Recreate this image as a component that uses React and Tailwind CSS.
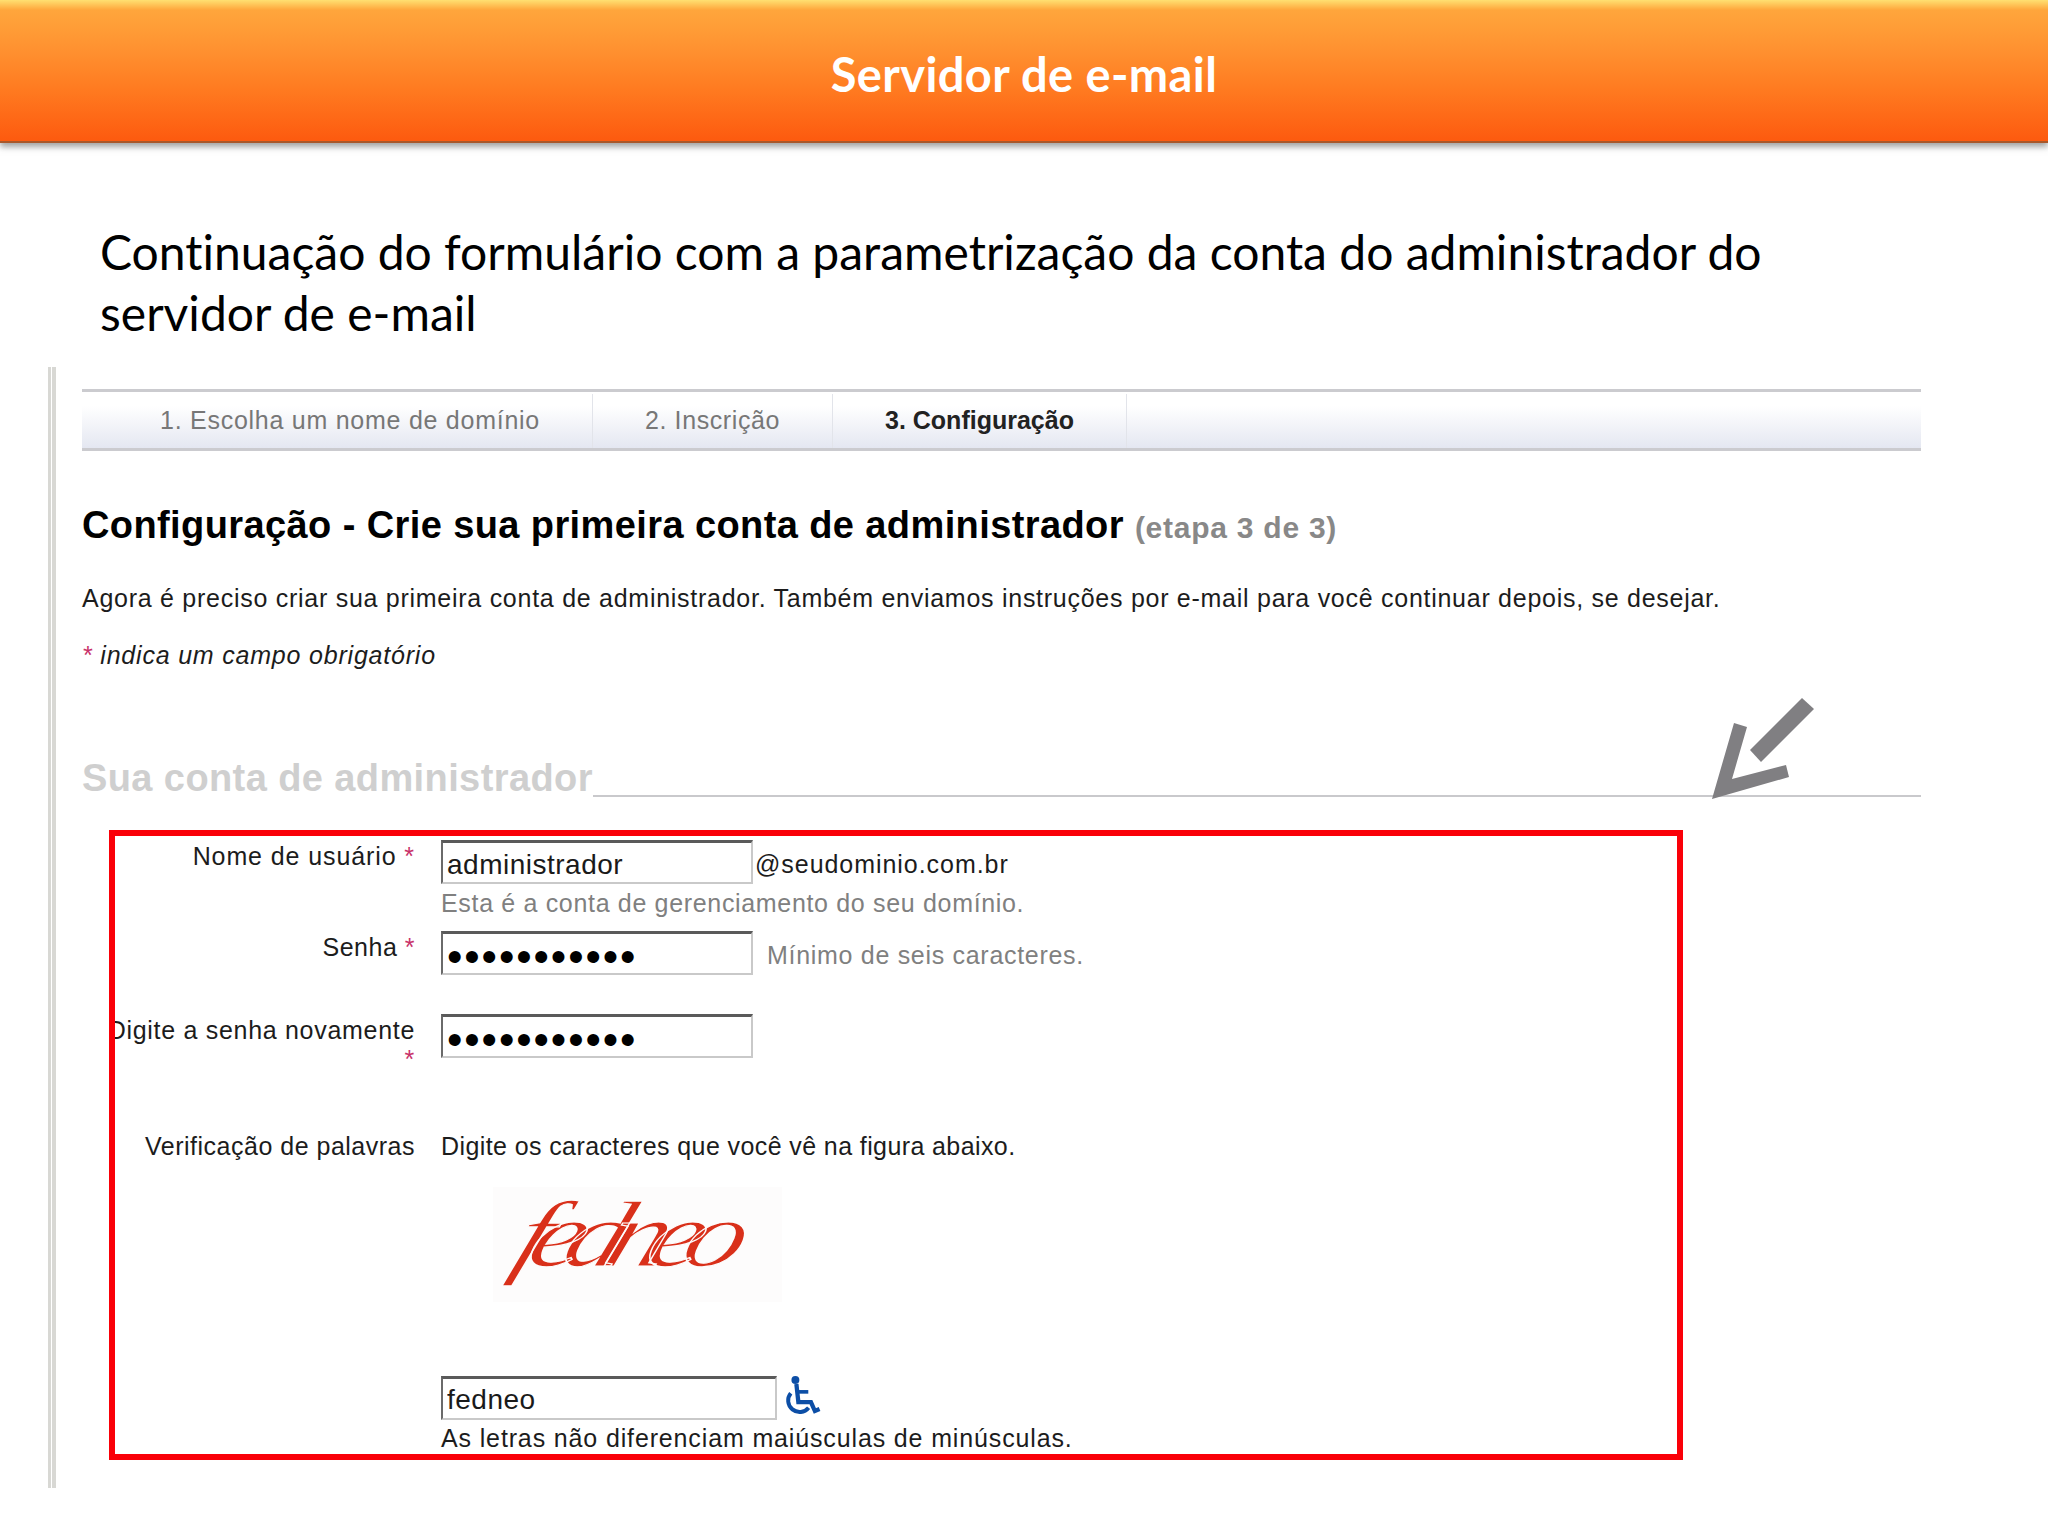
import React from "react"

const inputClass =
  "h-[44px] w-[312px] border-t-[3px] border-l-[2px] border-r-[2px] border-b-[2px] border-t-[#5a5a5a] border-l-[#6a6a6a] border-r-[#c9c9c9] border-b-[#c9c9c9] bg-white px-[4px] text-[28px] text-[#1a1a1a] outline-none"
const dotsClass = "pb-0 pt-[6px] text-[44px] leading-none tracking-[1.9px] text-black"

const Star = () => <span className="text-[#c8326a]"> *</span>

const FormRow = ({ label, children, className }) => (
  <div className={"flex " + (className || "")}>
    <div className="w-[305px] shrink-0 pr-[5px] pt-[1px] text-right">{label}</div>
    <div className="ml-[21px] min-w-0 flex-1">{children}</div>
  </div>
)

const App = () => {
  return (
    <div className="flex h-[1536px] w-[2048px] flex-col overflow-hidden bg-white font-['Liberation_Sans',Arial,sans-serif]">
      <header className="flex h-[143px] shrink-0 items-center justify-center border-b-[2px] border-[#a8572a] bg-[linear-gradient(180deg,#ffe071_0px,#ffa63c_10px,#ff9130_50px,#ff7a20_90px,#fd5a0f_141px)] pt-[8px] shadow-[0_4px_6px_rgba(90,90,90,0.55)]">
        <h1 className="font-['Lato',sans-serif] text-[47px] font-bold tracking-[0.4px] text-white [font-variant-ligatures:none]">Servidor de e-mail</h1>
      </header>

      <p className="mt-[78px] w-[1800px] pl-[100px] font-['Lato',sans-serif] text-[48px] leading-[61px] text-black [font-variant-ligatures:none]">
        Continuação do formulário com a parametrização da conta do administrador do servidor de e-mail
      </p>

      <section className="relative ml-[48px] mt-[24px] h-[1121px] w-[1880px] border-l-[3px] border-[#d8d8d4] pl-[1px]">
        <div className="h-full border-l-[4px] border-[#d8d8d4] pl-[26px] pt-[22px]">
          <nav className="flex h-[62px] w-[1839px] border-y-[3px] border-[#cbcbcf] bg-[linear-gradient(180deg,#ffffff_0%,#ffffff_25%,#e4e7f1_100%)] pt-[2px] text-[25px] tracking-[0.6px] text-[#777]">
            <div className="flex w-[511px] items-center border-r border-[#e2e4ea] pl-[78px] tracking-[0.74px]">1. Escolha um nome de domínio</div>
            <div className="flex w-[240px] items-center border-r border-[#e2e4ea] pl-[52px]">2. Inscrição</div>
            <div className="flex w-[294px] items-center border-r border-[#e2e4ea] pl-[52px] font-bold tracking-[0px] text-[#222]">3. Configuração</div>
          </nav>

          <h2 className="mt-[52px] text-[38px] font-bold leading-[44px] tracking-[0.4px] text-black">
            Configuração - Crie sua primeira conta de administrador{" "}
            <span className="text-[30px] tracking-[0.75px] text-[#888]">(etapa 3 de 3)</span>
          </h2>
          <p className="mt-[33px] text-[25px] leading-[30px] tracking-[0.73px] text-[#1c1c1c]">
            Agora é preciso criar sua primeira conta de administrador. Também enviamos instruções por e-mail para você continuar depois, se desejar.
          </p>
          <p className="mt-[27px] text-[25px] italic leading-[30px] tracking-[0.8px] text-[#1c1c1c]">
            <span className="text-[#c8326a]">*</span> indica um campo obrigatório
          </p>

          <div className="mt-[86px] flex w-[1839px] items-end">
            <h3 className="text-[38px] font-bold leading-[44px] tracking-[0.4px] text-[#cfcfcf]">Sua conta de administrador</h3>
            <div className="mb-[3px] h-[2px] flex-1 bg-[#c9c9cc]" />
          </div>

          <div className="ml-[27px] mt-[30px] h-[630px] w-[1574px] overflow-hidden border-[6px] border-[#fa0008] pt-[4px] text-[25px] leading-[30px] tracking-[0.5px] text-[#1c1c1c]">
            <FormRow label={<span className="tracking-[0.9px]">Nome de usuário<Star /></span>}>
              <div className="flex items-center">
                <input readOnly value="administrador" className={inputClass + " pt-[4px]"} />
                <span className="ml-[2px] mt-[4px] tracking-[0.95px]">@seudominio.com.br</span>
              </div>
              <div className="mt-[4px] tracking-[0.67px] text-[#808080]">Esta é a conta de gerenciamento do seu domínio.</div>
            </FormRow>

            <FormRow className="mt-[13px]" label={<>Senha<Star /></>}>
              <div className="flex items-center">
                <input readOnly type="password" value="administrad" className={inputClass + " " + dotsClass} />
                <span className="ml-[14px] mt-[4px] tracking-[0.7px] text-[#808080]">Mínimo de seis caracteres.</span>
              </div>
            </FormRow>

            <FormRow className="mt-[39px]" label={<span className="-ml-[40px] block whitespace-nowrap tracking-[0.7px]">Digite a senha novamente<span className="block leading-[29px] text-[#c8326a]">*</span></span>}>
              <input readOnly type="password" value="administrad" className={inputClass + " " + dotsClass} />
            </FormRow>

            <FormRow className="mt-[57px]" label={<span className="-mt-[1px] block">Verificação de palavras</span>}>
              <div className="tracking-[0.4px]">Digite os caracteres que você vê na figura abaixo.</div>
              <div className="ml-[52px] mt-[26px] flex h-[115px] w-[289px] items-center justify-center bg-[#fdfcfc]">
                <span className="origin-center -translate-x-[13px] -translate-y-[10px] -skew-x-[16deg] scale-x-[1.55] scale-y-[1.2] font-['Liberation_Serif',serif] text-[78px] italic leading-none tracking-[-12px] text-[#d9301a] [-webkit-text-stroke:1px_#fdfcfc]">fedneo</span>
              </div>
            </FormRow>

            <FormRow className="mt-[74px]" label="">
              <div className="flex items-start">
                <input readOnly value="fedneo" className={inputClass + " w-[336px] px-[2px] pt-[2px]"} />
                <svg className="-mt-[2px] ml-[6px] h-[43px] w-[40px] fill-none stroke-[#0c4ea6]" viewBox="1150 70 120 130">
                  <circle cx="1187" cy="88" r="12" fill="#0c4ea6" stroke="none" />
                  <path d="M1190 100 L1196 155 H1234 L1246 182 L1260 176" strokeWidth="13" />
                  <path d="M1195 124 H1226" strokeWidth="11" />
                  <path d="M1173 128 A33 33 0 1 0 1227 172" strokeWidth="12" />
                </svg>
              </div>
              <div className="mt-[3px] whitespace-nowrap tracking-[0.86px]">As letras não diferenciam maiúsculas de minúsculas.</div>
            </FormRow>
          </div>
        </div>

        <svg className="absolute left-[1609px] top-[303px] h-[170px] w-[200px]" viewBox="0 0 200 170">
          <polygon points="142,28 154,39 101,92 90,80" fill="#807f82" />
          <polygon points="74,53 87,57 72,109 126,95 129,107 52,129" fill="#807f82" />
        </svg>
      </section>
    </div>
  )
}

export default App
